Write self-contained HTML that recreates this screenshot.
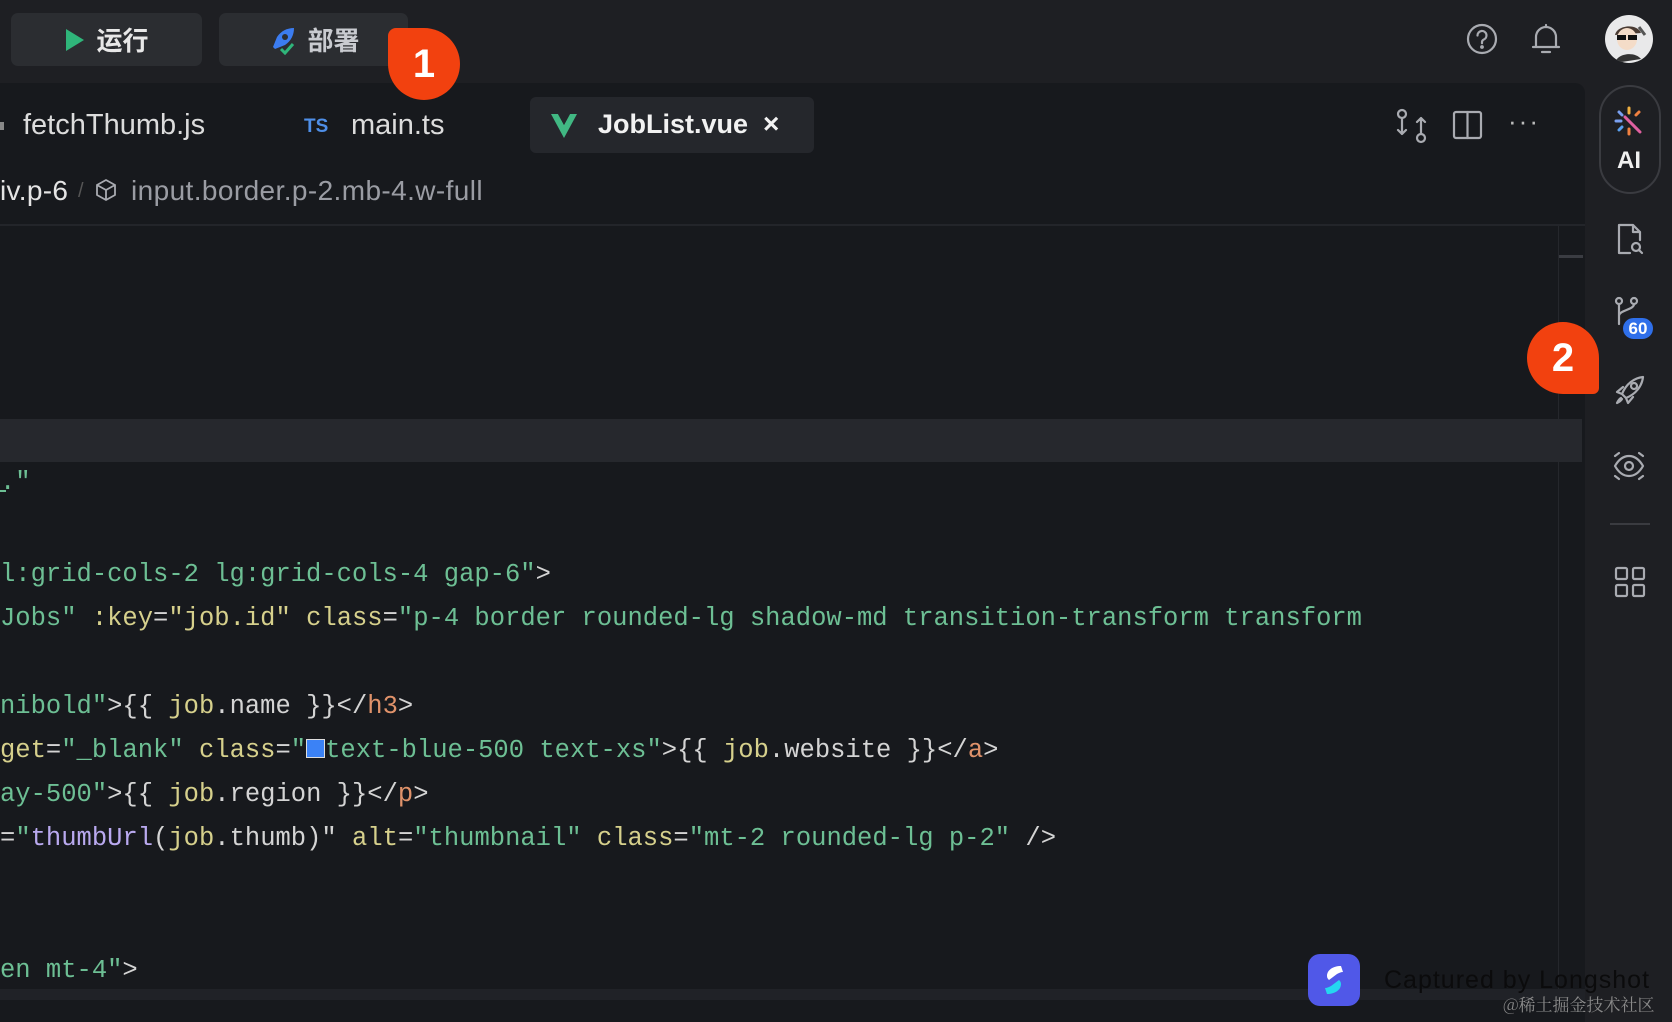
<!DOCTYPE html>
<html><head><meta charset="utf-8"><style>
*{margin:0;padding:0;box-sizing:border-box}
body{width:1672px;height:1022px;background:#1e1f23;overflow:hidden;position:relative;font-family:"Liberation Sans","Noto Sans CJK SC",sans-serif;color:#e6e6e6}
.a{position:absolute}
.btn{position:absolute;top:13px;height:53px;background:#2b2d31;border-radius:7px;display:flex;align-items:center;justify-content:center;font-size:26px;font-weight:bold;color:#e8e8e8;gap:10px}
.panel{position:absolute;left:0;top:83px;width:1585px;height:939px;background:#17191d;border-top-right-radius:10px}
.code{position:absolute;left:0;font-family:"Liberation Mono",monospace;font-size:25.5px;white-space:pre;line-height:30px;color:#d4d4d4}
.g{color:#6dbf94}.y{color:#d6d08c}.o{color:#e0926a}.p{color:#b9a9ef}.w{color:#d4d4d4}
.ico{position:absolute;stroke:#a9abb1;fill:none;stroke-width:2.2;stroke-linecap:round;stroke-linejoin:round}
.badge{position:absolute;width:72px;height:72px;background:#f2410f;color:#fff;font-size:40px;font-weight:bold;display:flex;align-items:center;justify-content:center}
</style></head><body>
<div class="btn" style="left:11px;width:191px"><svg width="22" height="26" viewBox="0 0 22 26"><path d="M2 2L20 13L2 24Z" fill="#2fb57a"/></svg>运行</div>
<div class="btn" style="left:219px;width:189px"><svg width="30" height="30" viewBox="0 0 30 30"><path d="M6 22L10 12C14 6 20 3 27 3C27 10 24 16 18 20L8 24Z" fill="#3b7cf0"/><circle cx="18" cy="12" r="3" fill="#2b2d31"/><path d="M14 24L18 28L26 19" stroke="#2fb57a" stroke-width="3" fill="none"/></svg><span style="color:#c9cbd0">部署</span></div>

<div class="ico" style="left:1466px;top:23px"><svg width="32" height="32" viewBox="0 0 32 32"><circle cx="16" cy="16" r="14"/><path d="M11.5 12.5a4.5 4.5 0 1 1 6 4.2c-1 .5-1.5 1.3-1.5 2.5v1"/><circle cx="16" cy="24" r=".8" fill="#a9abb1"/></svg></div>
<div class="ico" style="left:1530px;top:22px"><svg width="32" height="34" viewBox="0 0 32 34"><path d="M6 25V15a10 10 0 0 1 20 0v10H6zM3 25h26M12 30h8"/><path d="M16 3v2"/></svg></div>
<div class="a" style="left:1605px;top:15px;width:48px;height:48px;border-radius:50%;background:#e9e9ea;overflow:hidden"><svg width="48" height="48" viewBox="0 0 48 48"><path d="M10 20c2-10 22-12 26-2" fill="#4a3b33"/><ellipse cx="22" cy="24" rx="10" ry="11" fill="#f4dcc8"/><rect x="12" y="20" width="9" height="5" fill="#111"/><rect x="23" y="20" width="9" height="5" fill="#111"/><path d="M10 48c2-10 20-12 26-4" fill="#333"/><path d="M34 12l6 8" stroke="#555" stroke-width="3"/></svg></div>

<div class="panel"></div>
<div class="a" style="left:23px;top:109px;font-size:29px;color:#dcdcdc">fetchThumb.js</div>
<div class="a" style="left:0;top:122px;width:4px;height:8px;background:#888"></div>
<div class="a" style="left:304px;top:116px;font-size:19px;font-weight:bold;color:#4f8fe8">TS</div>
<div class="a" style="left:351px;top:109px;font-size:29px;color:#dcdcdc">main.ts</div>
<div class="a" style="left:530px;top:97px;width:284px;height:56px;background:#25272c;border-radius:6px"></div>
<svg class="a" style="left:550px;top:113px" width="28" height="26" viewBox="0 0 28 26"><path d="M1 1h7l6 11 6-11h7L14 25Z" fill="#41b883"/><path d="M8 1h4l2 4 2-4h4l-6 11Z" fill="#25272c"/></svg>
<div class="a" style="left:598px;top:109px;font-size:27px;font-weight:bold;color:#f2f2f2">JobList.vue</div>
<div class="a" style="left:763px;top:108px;font-size:28px;font-weight:bold;color:#f2f2f2">×</div>

<div class="ico" style="left:1395px;top:108px"><svg width="34" height="36" viewBox="0 0 34 36"><circle cx="7" cy="6" r="4"/><circle cx="26" cy="30" r="4"/><path d="M7 10v16l4-4M7 26l-4-4M26 26V10l-4 4M26 10l4 4" /></svg></div>
<div class="ico" style="left:1452px;top:109px"><svg width="32" height="32" viewBox="0 0 32 32"><rect x="2" y="3" width="27" height="26" rx="2"/><path d="M15.5 3v26"/></svg></div>
<div class="a" style="left:1508px;top:106px;font-size:26px;color:#bbb;letter-spacing:2px">···</div>

<div class="a" style="left:0;top:175px;font-size:28px;color:#e4e4e4;letter-spacing:0.3px">iv.p-6</div>
<div class="a" style="left:78px;top:180px;font-size:20px;color:#555">/</div>
<div class="ico" style="left:94px;top:178px"><svg width="24" height="24" viewBox="0 0 24 24"><path d="M12 2l9 5v10l-9 5-9-5V7zM3 7l9 5 9-5M12 12v10" stroke-width="1.8"/></svg></div>
<div class="a" style="left:131px;top:175px;font-size:28px;color:#9a9ca3;letter-spacing:0.4px">input.border.p-2.mb-4.w-full</div>
<div class="a" style="left:0;top:224px;width:1585px;height:2px;background:#23252a"></div>

<div class="a" style="left:1558px;top:226px;width:1px;height:764px;background:#25272c"></div>
<div class="a" style="left:1559px;top:255px;width:24px;height:3px;background:#3a3c42"></div>
<div class="a" style="left:0;top:419px;width:1582px;height:43px;background:#26282d"></div>
<div class="a" style="left:0;top:989px;width:1585px;height:11px;background:#202227"></div>

<div class="code" style="top:468px"><span class="g">."</span></div>
<div class="a" style="left:0;top:490px;width:6px;height:2px;background:#6dbf94"></div>
<div class="code" style="top:560px"><span class="g">l:grid-cols-2 lg:grid-cols-4 gap-6"</span><span class="w">&gt;</span></div>
<div class="code" style="top:604px"><span class="g">Jobs"</span> <span class="y">:key</span><span class="w">=</span><span class="y">"job.id"</span> <span class="y">class</span><span class="w">=</span><span class="g">"p-4 border rounded-lg shadow-md transition-transform transform</span></div>
<div class="code" style="top:692px"><span class="g">nibold"</span><span class="w">&gt;{{ </span><span class="y">job</span><span class="w">.name }}&lt;/</span><span class="o">h3</span><span class="w">&gt;</span></div>
<div class="code" style="top:736px"><span class="y">get</span><span class="w">=</span><span class="g">"_blank"</span> <span class="y">class</span><span class="w">=</span><span class="g">"<span style="display:inline-block;width:19px;height:19px;background:#3b82f6;border:1px solid #ddd;vertical-align:-1px"></span>text-blue-500 text-xs"</span><span class="w">&gt;{{ </span><span class="y">job</span><span class="w">.website }}&lt;/</span><span class="o">a</span><span class="w">&gt;</span></div>
<div class="code" style="top:780px"><span class="g">ay-500"</span><span class="w">&gt;{{ </span><span class="y">job</span><span class="w">.region }}&lt;/</span><span class="o">p</span><span class="w">&gt;</span></div>
<div class="code" style="top:824px"><span class="w">=</span><span class="g">"</span><span class="p">thumbUrl</span><span class="w">(</span><span class="y">job</span><span class="w">.thumb)"</span> <span class="y">alt</span><span class="w">=</span><span class="g">"thumbnail"</span> <span class="y">class</span><span class="w">=</span><span class="g">"mt-2 rounded-lg p-2"</span> <span class="w">/&gt;</span></div>
<div class="code" style="top:956px"><span class="g">en mt-4"</span><span class="w">&gt;</span></div>

<div class="a" style="left:1599px;top:85px;width:62px;height:109px;border:2px solid #3a3b40;border-radius:31px"></div>
<svg class="a" style="left:1614px;top:106px" width="30" height="30" viewBox="0 0 30 30" stroke-width="3" stroke-linecap="round"><path d="M15 2v5" stroke="#f0b040"/><path d="M5 6l3 3" stroke="#7aa0f0"/><path d="M25 6l-3 3" stroke="#f08040"/><path d="M2 15h5" stroke="#7aa0f0"/><path d="M5 24l3-3" stroke="#5aa0f0"/><path d="M15 28v-5" stroke="#f08040"/><path d="M11 11l15 15" stroke="#e060a0"/></svg>
<div class="a" style="left:1617px;top:147px;font-size:24px;font-weight:bold;color:#f0f0f0">AI</div>
<div class="ico" style="left:1615px;top:222px"><svg width="32" height="34" viewBox="0 0 32 34"><path d="M15 31H4V3h14l7 7v8M18 3v7h7"/><circle cx="21" cy="25" r="4"/><path d="M24 28l3 3"/></svg></div>
<div class="ico" style="left:1614px;top:296px"><svg width="30" height="32" viewBox="0 0 30 32"><circle cx="5" cy="5" r="3"/><circle cx="20" cy="5" r="3"/><path d="M5 8v20M20 8c0 6-15 6-15 12"/></svg></div>
<div class="a" style="left:1621px;top:316px;width:34px;height:25px;border-radius:13px;background:#2f6fea;color:#fff;font-size:17px;font-weight:bold;display:flex;align-items:center;justify-content:center;border:2px solid #1e1f23">60</div>
<div class="ico" style="left:1614px;top:374px"><svg width="32" height="32" viewBox="0 0 32 32"><path d="M8 20C12 10 20 4 29 3c-1 9-7 17-17 21zM8 20l-5-2 6-5M12 24l2 5 5-6"/><circle cx="20" cy="12" r="3"/><path d="M7 24c-2 1-3 3-4 5 2-1 4-2 5-4"/></svg></div>
<div class="ico" style="left:1612px;top:450px"><svg width="34" height="32" viewBox="0 0 34 32"><path d="M3 16c4-7 9-10 14-10s10 3 14 10c-4 7-9 10-14 10S7 23 3 16z"/><circle cx="17" cy="16" r="4"/><path d="M3 6l4-3M31 6l-4-3M3 26l4 3M31 26l-4 3"/></svg></div>
<div class="a" style="left:1610px;top:523px;width:40px;height:2px;background:#3a3b40"></div>
<div class="ico" style="left:1614px;top:566px"><svg width="32" height="32" viewBox="0 0 32 32"><rect x="2" y="2" width="11" height="11" rx="1.5"/><rect x="19" y="2" width="11" height="11" rx="1.5"/><rect x="2" y="19" width="11" height="11" rx="1.5"/><rect x="19" y="19" width="11" height="11" rx="1.5"/></svg></div>

<div class="badge" style="left:388px;top:28px;border-radius:50%;border-top-left-radius:8px">1</div>
<div class="badge" style="left:1527px;top:322px;border-radius:50%;border-bottom-right-radius:6px">2</div>

<div class="a" style="left:1308px;top:954px;width:52px;height:52px;border-radius:12px;background:#5058e8"><svg width="52" height="52" viewBox="0 0 52 52"><path d="M33 12c-8 0-14 4-14 10 0 2 1 3 2 4l8-6c2-1 4-2 6-2z" fill="#fff"/><path d="M19 40c8 0 14-4 14-10 0-2-1-3-2-4l-8 6c-2 1-4 2-6 2z" fill="#25d6f0"/></svg></div>
<div class="a" style="left:1384px;top:966px;font-size:25px;color:#0b0b0c;letter-spacing:1px">Captured by Longshot</div>
<div class="a" style="left:1503px;top:991px;font-size:17px;color:#8a8a8a;font-family:'Noto Serif CJK SC','Noto Sans CJK SC',serif">@稀土掘金技术社区</div>
</body></html>
